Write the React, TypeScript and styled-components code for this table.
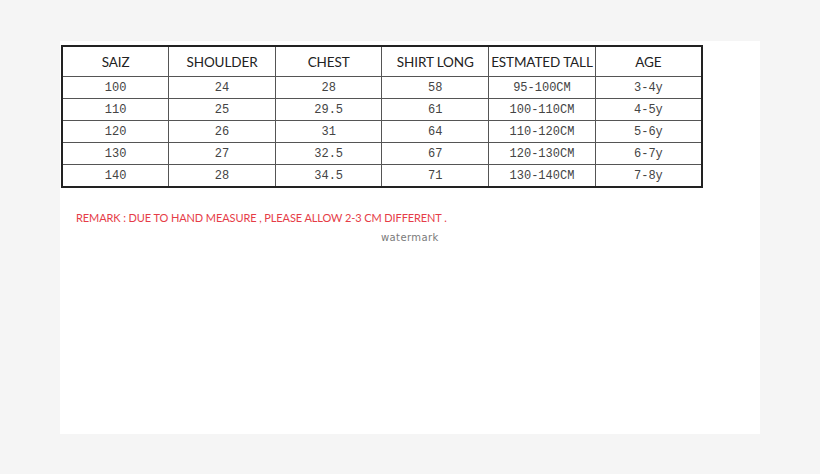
import React from "react";
import styled, { createGlobalStyle } from "styled-components";

const Global = createGlobalStyle`
  html, body { margin: 0; padding: 0; background: #f5f5f5; }
  body { width: 820px; height: 474px; overflow: hidden; }
`;

const Page = styled.div`
  width: 820px;
  height: 474px;
  padding: 41px 0 0 60px;
  box-sizing: border-box;
`;

const Card = styled.div`
  width: 700px;
  height: 393px;
  background: #ffffff;
  padding: 4px 0 0 1px;
  box-sizing: border-box;
  display: flex;
  flex-direction: column;
`;

const Table = styled.table`
  border-collapse: collapse;
  width: 642px;
  border: 2px solid #222;
  table-layout: fixed;
`;

const Th = styled.th`
  height: 29px;
  padding: 0;
  border: 1px solid #555;
  font-family: Lato, "Liberation Sans", sans-serif;
  font-weight: 400;
  font-size: 13.5px;
  color: #222;
  text-align: center;
  white-space: nowrap;
  letter-spacing: -0.1px;
`;

const Td = styled.td`
  height: 21px;
  padding: 0;
  border: 1px solid #555;
  font-family: "Liberation Mono", monospace;
  font-size: 12px;
  color: #444;
  text-align: center;
  white-space: nowrap;
`;

const Remark = styled.div`
  margin: 23px 0 0 15px;
  font-family: Lato, "Open Sans", sans-serif;
  font-size: 11px;
  color: #e63c47;
  letter-spacing: -0.1px;
`;

const Watermark = styled.div`
  margin: 8px 0 0 320px;
  font-family: "DejaVu Sans", sans-serif;
  font-size: 10px;
  color: #7a7a7a;
  letter-spacing: 0.4px;
`;

const headers = ["SAIZ", "SHOULDER", "CHEST", "SHIRT LONG", "ESTMATED TALL", "AGE"];
const rows = [
  ["100", "24", "28", "58", "95-100CM", "3-4y"],
  ["110", "25", "29.5", "61", "100-110CM", "4-5y"],
  ["120", "26", "31", "64", "110-120CM", "5-6y"],
  ["130", "27", "32.5", "67", "120-130CM", "6-7y"],
  ["140", "28", "34.5", "71", "130-140CM", "7-8y"],
];

export default function App() {
  return (
    <>
      <Global />
      <Page>
        <Card>
          <Table>
            <thead>
              <tr>
                {headers.map((h) => (
                  <Th key={h}>{h}</Th>
                ))}
              </tr>
            </thead>
            <tbody>
              {rows.map((r) => (
                <tr key={r[0]}>
                  {r.map((c, i) => (
                    <Td key={i}>{c}</Td>
                  ))}
                </tr>
              ))}
            </tbody>
          </Table>
          <Remark>REMARK : DUE TO HAND MEASURE , PLEASE ALLOW 2-3 CM DIFFERENT .</Remark>
          <Watermark>watermark</Watermark>
        </Card>
      </Page>
    </>
  );
}
